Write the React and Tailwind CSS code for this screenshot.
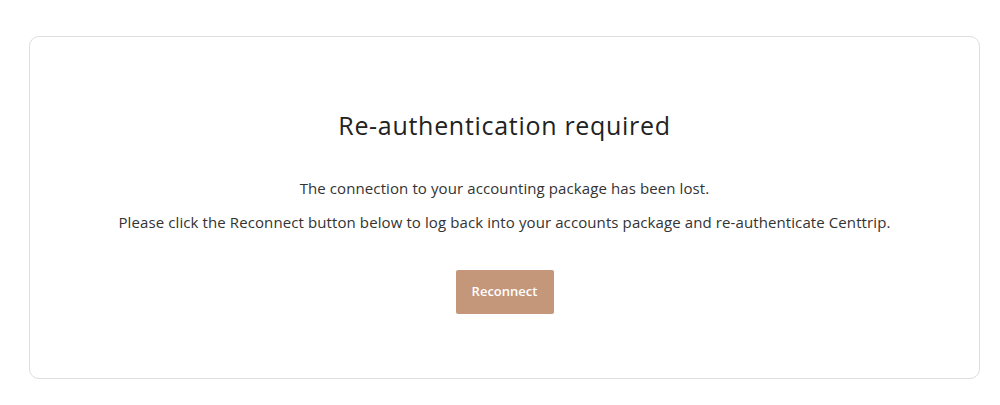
import React from 'react';

const App = () => {
  return (
    <div className="w-[1000px] h-[405px] bg-white pt-[36px] pl-[29px]" style={{ fontFamily: '"Open Sans", Lato, sans-serif' }}>
      <div className="w-[951px] h-[343px] border border-[#dedede] rounded-[10px] flex flex-col items-center">
        <h1 className="mt-[73px] text-[25px] leading-[30px] text-[#222] tracking-[0.7px]">
          Re-authentication required
        </h1>
        <p className="mt-[38px] text-[15px] leading-[20px] text-[#333] tracking-[0.1px]">
          The connection to your accounting package has been lost.
        </p>
        <p className="mt-[14px] text-[15px] leading-[20px] text-[#333] tracking-[0.1px]">
          Please click the Reconnect button below to log back into your accounts package and re-authenticate Centtrip.
        </p>
        <button className="mt-[38px] w-[98px] h-[44px] rounded-[2px] bg-[#c4967a] text-white text-[13px] font-semibold">
          Reconnect
        </button>
      </div>
    </div>
  );
};

export default App;
